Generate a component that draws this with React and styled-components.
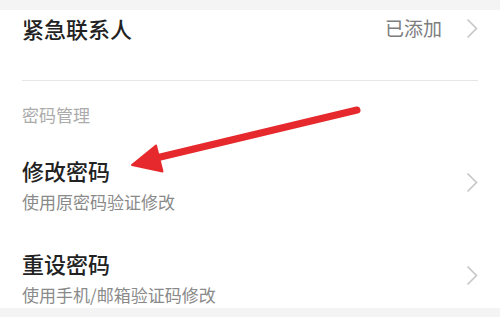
import styled, { createGlobalStyle } from "styled-components";

const GlobalStyle = createGlobalStyle`
  html, body {
    margin: 0;
    padding: 0;
    background: #f4f4f4;
  }
  body {
    font-family: "Noto Sans CJK SC", "Noto Sans", sans-serif;
    width: 500px;
    height: 317px;
    overflow: hidden;
  }
`;

const Page = styled.div`
  position: relative;
  padding-top: 10px;
  height: 317px;
  box-sizing: border-box;
`;

const Card = styled.div`
  background: #fff;
  padding: 0 22px;
  height: 298px;
  overflow: hidden;
`;

const ContactRow = styled.div`
  display: flex;
  align-items: flex-start;
  height: 70px;
  border-bottom: 1px solid #e6e6e6;
`;

const Title = styled.div`
  flex: 1;
  font-size: 22px;
  line-height: 36px;
  font-weight: 500;
  color: #222;
`;

const Status = styled.span`
  font-size: 19px;
  line-height: 36px;
  color: #7d7d7d;
  margin-right: 24px;
`;

const SectionHeader = styled.div`
  padding: 24px 0 16px;
  font-size: 17px;
  line-height: 20px;
  color: #ababab;
`;

const Item = styled.div`
  display: flex;
  align-items: center;
  padding: 14px 0 20px;
`;

const ItemText = styled.div`
  flex: 1;
  display: flex;
  flex-direction: column;
  gap: 5px;
`;

const ItemTitle = styled.div`
  font-size: 22px;
  line-height: 30px;
  font-weight: 500;
  color: #222;
`;

const ItemSub = styled.div`
  font-size: 17px;
  line-height: 24px;
  color: #8a8a8a;
`;

const ChevronWrap = styled.span`
  display: flex;
  margin-top: ${({ top }) => top || 0}px;
  margin-bottom: ${({ lift }) => lift || 0}px;
`;

const Overlay = styled.svg`
  position: absolute;
  left: 0;
  top: 0;
  pointer-events: none;
`;

const Chevron = ({ top, lift }) => (
  <ChevronWrap top={top} lift={lift}>
    <svg width="12" height="21" viewBox="0 0 12 21">
      <polyline points="1.5,1.5 10.5,10.5 1.5,19.5" fill="none" stroke="#c6c6c6" strokeWidth="1.6" />
    </svg>
  </ChevronWrap>
);

const items = [
  { title: "修改密码", sub: "使用原密码验证修改" },
  { title: "重设密码", sub: "使用手机/邮箱验证码修改" },
];

const App = () => (
  <Page>
    <GlobalStyle />
    <Card>
      <ContactRow>
        <Title>紧急联系人</Title>
        <Status>已添加</Status>
        <Chevron top={8} />
      </ContactRow>
      <SectionHeader>密码管理</SectionHeader>
      {items.map((item) => (
        <Item key={item.title}>
          <ItemText>
            <ItemTitle>{item.title}</ItemTitle>
            <ItemSub>{item.sub}</ItemSub>
          </ItemText>
          <Chevron lift={5} />
        </Item>
      ))}
    </Card>
    <Overlay width="500" height="317" viewBox="0 0 500 317">
      <line x1="357" y1="110" x2="152" y2="159" stroke="#e6292d" strokeWidth="7" strokeLinecap="round" />
      <polygon points="132,165 156,145.5 162.5,171.5" fill="#e6292d" stroke="#e6292d" strokeWidth="2" strokeLinejoin="round" />
    </Overlay>
  </Page>
);

export default App;
